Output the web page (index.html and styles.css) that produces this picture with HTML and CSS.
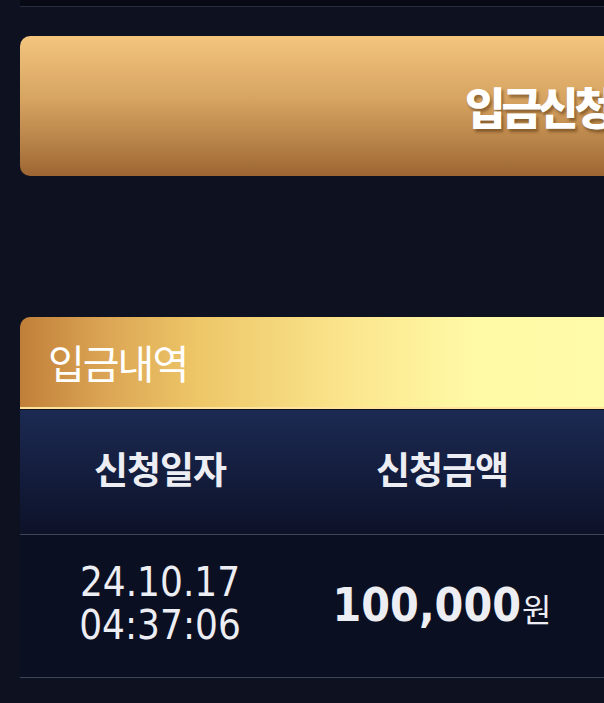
FILE: index.html
```html
<!DOCTYPE html>
<html lang="ko">

<head>
    <meta charset="UTF-8">
    <meta name="viewport" content="width=device-width, initial-scale=1.0">
    <title>입금신청</title>
    <link rel="stylesheet" href="styles.css">
</head>

<body>
    <div class="page">
        <div class="top-strip"></div>

        <button class="apply-btn">입금신청</button>

        <div class="history">
            <div class="history-title">입금내역</div>
            <div class="table">
                <div class="row head">
                    <div class="cell">신청일자</div>
                    <div class="cell">신청금액</div>
                    <div class="cell"></div>
                </div>
                <div class="row body">
                    <div class="cell date">24.10.17<br>04:37:06</div>
                    <div class="cell amount">100,000<span class="won">원</span></div>
                    <div class="cell"></div>
                </div>
            </div>
        </div>
    </div>
</body>

</html>
```

FILE: styles.css
```css
body {
    margin: 0;
    background-color: #0d1120;
    overflow: hidden;
    font-family: "Noto Sans CJK KR", "Noto Sans", sans-serif;
    color: #eceef4;
}

.page {
    width: 1036px;
    margin-left: 20px;
}

.top-strip {
    height: 6px;
    background-color: #070a15;
    border-bottom: 1px solid #262d40;
}

.apply-btn {
    display: block;
    width: 100%;
    height: 140px;
    margin-top: 29px;
    border: none;
    border-radius: 10px;
    background: linear-gradient(#f3c57d, #d7a462 45%, #b37e44 80%, #9c6532);
    color: #fff;
    font-family: "Noto Sans CJK KR", sans-serif;
    font-size: 44px;
    font-weight: 900;
    letter-spacing: -4px;
    text-shadow: 2px 3px 3px rgba(60, 30, 0, 0.45);
}

.history {
    margin-top: 141px;
}

.history-title {
    height: 90px;
    display: flex;
    align-items: center;
    padding-left: 28px;
    border-radius: 10px 10px 0 0;
    background: linear-gradient(90deg, #c07f38, #dba454 8%, #edc667 17%, #fbe68e 32%, #fffaa6 44%, #fffcae);
    border-bottom: 2px solid #ffe39a;
    font-size: 40px;
    letter-spacing: -2px;
    color: #fff;
}

.row {
    display: grid;
    grid-template-columns: 280px 284px 1fr;
    border-bottom: 1px solid #3e4559;
}

.row.head {
    height: 124px;
    margin-top: 1px;
    background: linear-gradient(#1c2a52, #131c3c 55%, #0d1228);
}

.row.body {
    height: 142px;
    background-color: #0b0f22;
}

.cell {
    display: flex;
    align-items: center;
    justify-content: center;
    text-align: center;
}

.head .cell {
    font-size: 37px;
    font-weight: bold;
    letter-spacing: -1px;
    padding-bottom: 8px;
}

.date {
    font-family: "DejaVu Sans Condensed", "DejaVu Sans", sans-serif;
    font-size: 40px;
    line-height: 43px;
    padding-bottom: 4px;
}

.amount {
    font-family: "DejaVu Sans Condensed", "DejaVu Sans", sans-serif;
    font-size: 46px;
    font-weight: bold;
    padding-bottom: 2px;
}

.won {
    font-family: "Noto Sans CJK KR", sans-serif;
    font-size: 32px;
    font-weight: normal;
    margin-left: 1px;
    padding-top: 6px;
}
```
